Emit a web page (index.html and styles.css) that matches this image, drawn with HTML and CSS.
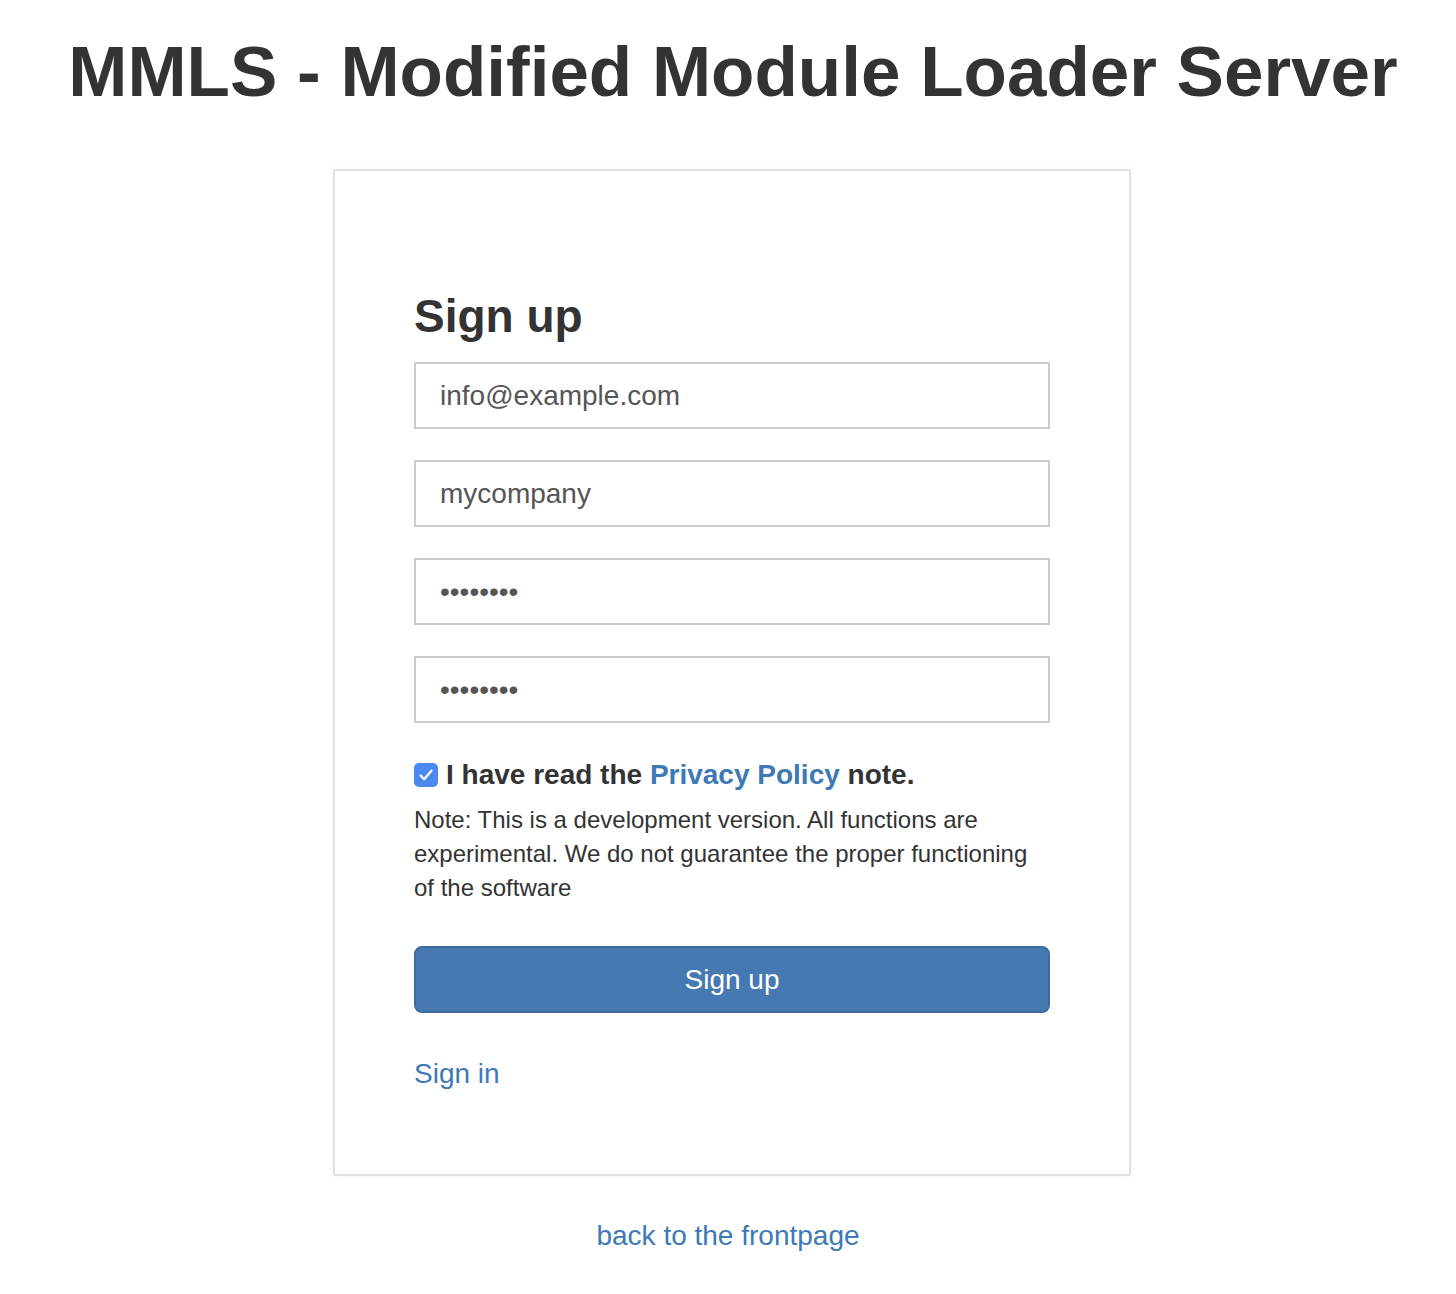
FILE: index.html
```html
<!DOCTYPE html>
<html lang="en">
<head>
<meta charset="utf-8">
<title>MMLS - Sign up</title>
<link rel="stylesheet" href="styles.css">
</head>
<body>
<h1 class="page-title">MMLS - Modified Module Loader Server</h1>
<div class="card">
  <h2 class="card-title">Sign up</h2>
  <form class="form">
    <input class="field" type="email" value="info@example.com">
    <input class="field" type="text" value="mycompany">
    <input class="field" type="password" value="12345678">
    <input class="field" type="password" value="12345678">
    <label class="check-row">
      <span class="check-box"><svg width="24" height="24" viewBox="0 0 24 24"><path d="M6.5 12.5l3.6 3.8 7.4-8.6" fill="none" stroke="#fff" stroke-width="2.2" stroke-linecap="round" stroke-linejoin="round"/></svg></span>
      <span class="check-text">I have read the <a class="link" href="#">Privacy Policy</a> note.</span>
    </label>
    <p class="note">Note: This is a development version. All functions are experimental. We do not guarantee the proper functioning of the software</p>
    <button class="btn" type="button">Sign up</button>
  </form>
  <a class="link signin" href="#">Sign in</a>
</div>
<div class="back"><a class="link" href="#">back to the frontpage</a></div>
</body>
</html>
```
FILE: styles.css
```css
html, body {
  margin: 0;
  padding: 0;
  background: #fff;
}
body {
  font-family: "Liberation Sans", Arial, Helvetica, sans-serif;
  color: #333;
}
.page-title {
  margin: 33px 0 0;
  font-size: 71px;
  line-height: 78px;
  font-weight: bold;
  text-align: center;
  color: #333;
  padding-left: 10px;
}
.card {
  box-sizing: border-box;
  width: 798px;
  margin: 58px 0 0 calc(50% - 395px);
  border: 2px solid #e2e2e2;
  box-shadow: 0 0 6px rgba(0,0,0,0.05);
  padding: 120px 79px 80px;
  background: #fff;
}
.card-title {
  margin: 0 0 20px;
  font-size: 46px;
  line-height: 51px;
  font-weight: bold;
  color: #333;
}
.form {
  display: flex;
  flex-direction: column;
}
.field {
  box-sizing: border-box;
  height: 67px;
  width: 100%;
  margin: 0 0 31px;
  border: 2px solid #cccccc;
  border-radius: 0;
  padding: 0 24px;
  font-family: "Liberation Sans", Arial, sans-serif;
  font-size: 28px;
  color: #555;
  background: #fff;
  outline: none;
}
.check-row {
  display: flex;
  align-items: center;
  height: 40px;
  gap: 8px;
  margin-top: 1px;
}
.check-box {
  width: 24px;
  height: 24px;
  border-radius: 5px;
  background: #4a89f0;
  display: flex;
  flex: none;
}
.check-text {
  font-size: 28px;
  font-weight: bold;
  color: #333;
  line-height: 40px;
}
.link {
  color: #3d79b4;
  text-decoration: none;
}
.note {
  margin: 8px 0 0;
  font-size: 24px;
  line-height: 34px;
  color: #333;
}
.btn {
  margin-top: 41px;
  height: 67px;
  width: 100%;
  box-sizing: border-box;
  background: #4679b2;
  border: 2px solid #3c6ba1;
  border-radius: 8px;
  color: #fff;
  font-family: "Liberation Sans", Arial, sans-serif;
  font-size: 28px;
  padding: 0;
}
.signin {
  display: block;
  margin-top: 41px;
  font-size: 28px;
  line-height: 40px;
  width: max-content;
}
.back {
  margin-top: 40px;
  text-align: center;
  font-size: 28px;
  line-height: 40px;
}
```
